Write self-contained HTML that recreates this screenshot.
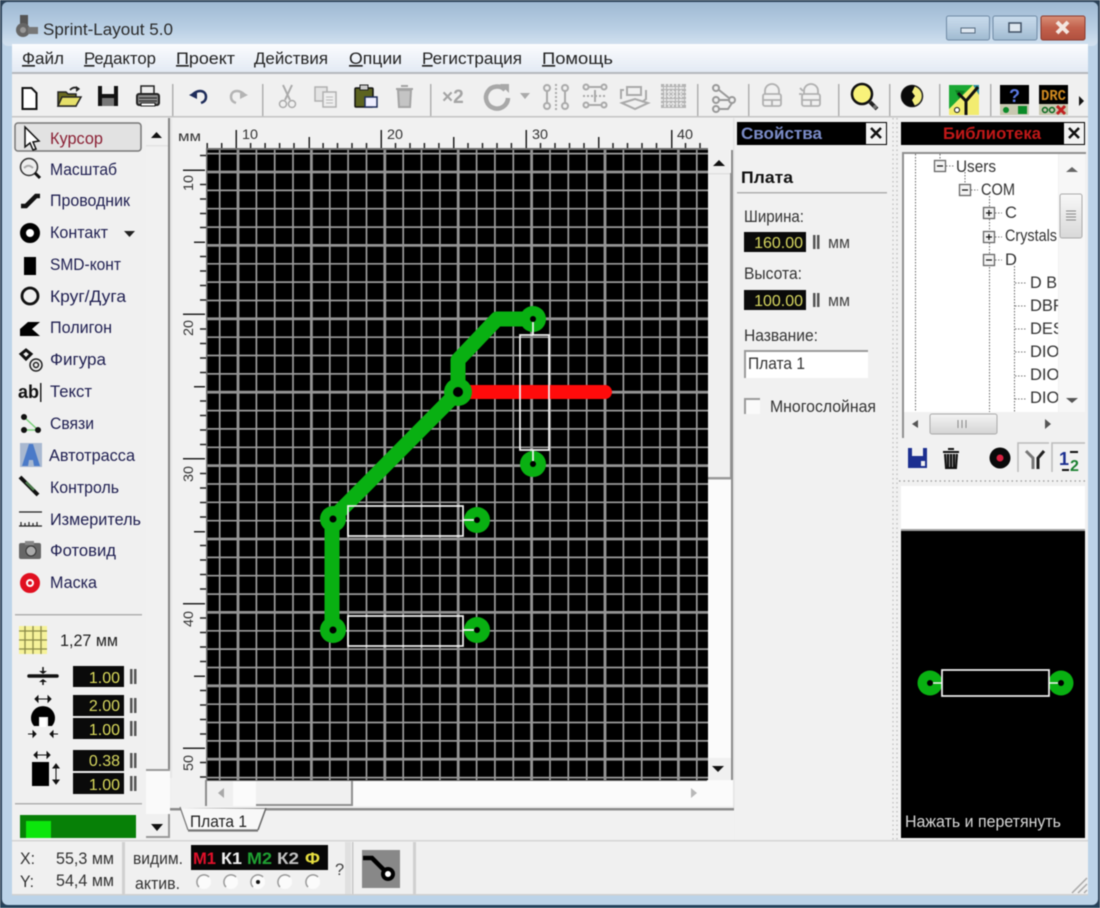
<!DOCTYPE html>
<html><head><meta charset="utf-8"><title>Sprint-Layout 5.0</title>
<style>
html,body{margin:0;padding:0;background:#f0f0f0;width:1100px;height:908px;overflow:hidden}
svg{display:block;filter:blur(.5px)}
text{font-family:"Liberation Sans","DejaVu Sans",sans-serif;font-size:16.5px;fill:#1c1c3c}
.n{fill:#1e1e50}.m{fill:#222}.g{fill:#333}
.y{fill:#d8d860;text-anchor:end;font-size:16px}
.u{text-decoration:underline}
</style></head><body>
<svg width="1100" height="908" viewBox="0 0 1100 908" xmlns="http://www.w3.org/2000/svg">
<defs>
<linearGradient id="tb" x1="0" y1="0" x2="0" y2="1"><stop offset="0" stop-color="#9fb9d3"/><stop offset=".6" stop-color="#b9cfe4"/><stop offset="1" stop-color="#d3e2f0"/></linearGradient>
<linearGradient id="mn" x1="0" y1="0" x2="0" y2="1"><stop offset="0" stop-color="#fbfcfe"/><stop offset="1" stop-color="#e3eaf4"/></linearGradient>
<linearGradient id="cb" x1="0" y1="0" x2="0" y2="1"><stop offset="0" stop-color="#d89078"/><stop offset=".5" stop-color="#c2604c"/><stop offset="1" stop-color="#b0503e"/></linearGradient>
<linearGradient id="wb" x1="0" y1="0" x2="0" y2="1"><stop offset="0" stop-color="#c8dbec"/><stop offset=".5" stop-color="#b8cde0"/><stop offset="1" stop-color="#a0bad0"/></linearGradient>
<linearGradient id="th" x1="0" y1="0" x2="0" y2="1"><stop offset="0" stop-color="#f4f4f4"/><stop offset="1" stop-color="#d4d4d4"/></linearGradient>
<linearGradient id="kb" x1="0" y1="0" x2="0" y2="1"><stop offset="0" stop-color="#f8f8f8"/><stop offset="1" stop-color="#d8d8d8"/></linearGradient>
<clipPath id="treeclip"><rect x="904" y="154" width="154" height="258"/></clipPath>
<clipPath id="boardclip"><rect x="206" y="148" width="502" height="632"/></clipPath>
</defs>

<!-- window frame -->
<rect width="1100" height="908" fill="#2c4258"/>
<rect x="2" y="2" width="1096" height="903" rx="6" fill="#bcd3e8"/>
<rect x="2" y="2" width="1096" height="44" rx="6" fill="url(#tb)"/>
<rect x="12" y="44" width="1076" height="851" fill="#f0f0f0"/>
<rect x="0" y="905" width="1100" height="3" fill="#23425c"/>

<!-- title -->
<g>
<rect x="20" y="15" width="8" height="12" fill="#555"/>
<circle cx="23" cy="30" r="7" fill="#666"/><circle cx="23" cy="30" r="3" fill="#999"/>
<rect x="28" y="27" width="10" height="7" fill="#777"/>
</g>
<text x="43" y="35" textLength="130" lengthAdjust="spacingAndGlyphs" style="fill:#2a2a2a;font-size:17px">Sprint-Layout 5.0</text>
<rect x="946.500" y="16" width="43" height="24" rx="2" fill="url(#wb)" stroke="#6f8aa5"/>
<rect x="961" y="28" width="14" height="5" fill="#dfe8f0" stroke="#556a80"/>
<rect x="993" y="16" width="44" height="24" rx="2" fill="url(#wb)" stroke="#6f8aa5"/>
<rect x="1009" y="23" width="12" height="9" fill="#dfe8f0" stroke="#3f5064" stroke-width="1.500"/>
<rect x="1041" y="16" width="44" height="24" rx="2" fill="url(#cb)" stroke="#8c3a2c"/>
<path d="M1057 22l11 11m0-11l-11 11" stroke="#f3e6e0" stroke-width="4"/>

<!-- menu -->
<rect x="12" y="44" width="1076" height="28" fill="url(#mn)"/>
<rect x="12" y="72" width="1076" height="2" fill="#b5b8bd"/>
<g class="menu">
<text x="22" y="64" textLength="42" lengthAdjust="spacingAndGlyphs" class="m"><tspan class="u">Ф</tspan>айл</text>
<text x="84" y="64" textLength="72" lengthAdjust="spacingAndGlyphs" class="m"><tspan class="u">Р</tspan>едактор</text>
<text x="176" y="64" textLength="59" lengthAdjust="spacingAndGlyphs" class="m"><tspan class="u">П</tspan>роект</text>
<text x="254" y="64" textLength="74" lengthAdjust="spacingAndGlyphs" class="m"><tspan class="u">Д</tspan>ействия</text>
<text x="349" y="64" textLength="53" lengthAdjust="spacingAndGlyphs" class="m"><tspan class="u">О</tspan>пции</text>
<text x="422" y="64" textLength="100" lengthAdjust="spacingAndGlyphs" class="m"><tspan class="u">Р</tspan>егистрация</text>
<text x="542" y="64" textLength="71" lengthAdjust="spacingAndGlyphs" class="m"><tspan class="u">П</tspan>омощь</text>
</g>

<!-- toolbar -->
<rect x="12" y="74" width="1076" height="41" fill="#f0f0f0"/>
<rect x="12" y="116" width="1076" height="1.500" fill="#c4c4c4"/>
<g fill="#b0b0b0">
<rect x="172" y="84" width="1.500" height="32"/><rect x="262" y="84" width="1.500" height="32"/><rect x="430" y="84" width="1.500" height="32"/><rect x="697" y="84" width="1.500" height="32"/><rect x="748" y="84" width="1.500" height="32"/><rect x="838" y="84" width="1.500" height="32"/><rect x="889" y="84" width="1.500" height="32"/><rect x="939" y="84" width="1.500" height="32"/><rect x="990" y="84" width="1.500" height="32"/>
</g>
<!-- new -->
<path d="M22.500 88h9l5 5v16h-14z" fill="#fff" stroke="#111" stroke-width="2"/>
<!-- open -->
<path d="M58 106V92h8l2 2h8v12z" fill="#6b6b20" stroke="#222" stroke-width="1.500"/>
<path d="M58 106l4-9h19l-5 9z" fill="#e6e06a" stroke="#222" stroke-width="1.500"/>
<path d="M70 90c3-3 6-3 9-1" fill="none" stroke="#222" stroke-width="1.800"/><path d="M76 86l4 3-4 3z" fill="#222"/>
<!-- save -->
<rect x="98" y="86" width="20" height="20" fill="#111"/><rect x="102" y="86" width="12" height="8" fill="#eee"/><rect x="102" y="98" width="12" height="8" fill="#777"/>
<!-- print -->
<rect x="141" y="86" width="13" height="8" fill="#eee" stroke="#222" stroke-width="1.500"/>
<rect x="137" y="94" width="22" height="11" rx="2" fill="#888" stroke="#222" stroke-width="2"/>
<path d="M139 98h18M139 101h18" stroke="#222"/><rect x="141" y="103" width="14" height="3" fill="#fff" stroke="#222"/>
<!-- undo/redo -->
<path d="M192 95c6-6 14-5 14 2 0 3-2 5-5 6" fill="none" stroke="#1e2c5a" stroke-width="2.500"/><path d="M189 95l8-4v8z" fill="#1e2c5a"/>
<path d="M245 95c-6-6-14-5-14 2 0 3 2 5 5 6" fill="none" stroke="#b4b4b4" stroke-width="2.500"/><path d="M248 95l-8-4v8z" fill="#b4b4b4"/>
<!-- cut copy paste trash -->
<path d="M283 85l7 15M292 85l-7 15" stroke="#aaa" stroke-width="2"/><circle cx="283" cy="104" r="3.500" fill="none" stroke="#aaa" stroke-width="1.500"/><circle cx="292" cy="104" r="3.500" fill="none" stroke="#aaa" stroke-width="1.500"/>
<rect x="315" y="87" width="12" height="14" fill="#e4e4e4" stroke="#b0b0b0" stroke-width="1.500"/><rect x="323" y="92" width="13" height="15" fill="#eee" stroke="#b0b0b0" stroke-width="1.500"/><path d="M326 97h7M326 100h7M326 103h7" stroke="#bbb"/>
<rect x="355" y="88" width="18" height="19" rx="1" fill="#5c6320" stroke="#111" stroke-width="1.500"/><rect x="360" y="85" width="8" height="5" fill="#ccc" stroke="#222"/><rect x="365" y="97" width="12" height="10" fill="#eef" stroke="#1e2c5a" stroke-width="1.500"/>
<path d="M398 90h13l-1 17h-11zM396 89h17M401 86h7" fill="#c4c4c4" stroke="#a4a4a4" stroke-width="2"/>
<!-- gray tools -->
<text x="442" y="103" style="font-weight:bold;font-size:19px;fill:#a4a4a4">×2</text>
<path d="M505 90a11 11 0 1 0 3 8" fill="none" stroke="#a8a8a8" stroke-width="4.500"/><path d="M500 84l9 0 0 9z" fill="#a8a8a8"/>
<path d="M520 93h10l-5 6z" fill="#aaa"/>
<g fill="none" stroke="#aaa" stroke-width="2">
<path d="M556 84v26" stroke-dasharray="2 2"/><circle cx="547" cy="88" r="3"/><circle cx="547" cy="106" r="3"/><circle cx="565" cy="88" r="3"/><circle cx="565" cy="106" r="3"/><path d="M547 91v12M565 91v12"/>
<path d="M583 96h24" stroke-dasharray="2 2"/><circle cx="586" cy="87" r="2.500"/><circle cx="604" cy="87" r="2.500"/><circle cx="586" cy="105" r="2.500"/><circle cx="604" cy="105" r="2.500"/><path d="M589 87h12M589 105h12M595 90v12"/>
<path d="M624 90h-3l0 9M646 90v9l-4 3" /><rect x="627" y="87" width="14" height="8"/><path d="M622 103l13-4 13 4-13 6z"/>
</g>
<rect x="661" y="84" width="25" height="24" fill="#b4b4b4"/>
<path d="M661 88h25M661 92h25M661 96h25M661 100h25M661 104h25M665 84v24M669 84v24M673 84v24M677 84v24M681 84v24" stroke="#f0f0f0" stroke-width="1.500" stroke-dasharray="2 1"/>
<g fill="none" stroke="#999" stroke-width="2"><circle cx="716" cy="88" r="3"/><circle cx="716" cy="100" r="3"/><circle cx="716" cy="109" r="3"/><circle cx="732" cy="100" r="3"/><path d="M719 90l10 8M719 100h10M719 109h9l4-6"/></g>
<g fill="none" stroke="#b0b0b0" stroke-width="1.800"><path d="M765 94v-3a7 7 0 0 1 14 0v3"/><rect x="763" y="94" width="18" height="12" rx="2"/><path d="M763 100h18M772 100v6"/>
<path d="M804 94v-3a7 7 0 0 1 14 0v3"/><rect x="802" y="94" width="18" height="12" rx="2"/><path d="M802 100h18M811 100v6M800 88l3 3M799 94h3"/></g>
<!-- zoom -->
<circle cx="862" cy="94" r="10" fill="#f8f27a" stroke="#111" stroke-width="2.500"/><path d="M870 102l7 7" stroke="#222" stroke-width="4"/><circle cx="875" cy="107" r="2" fill="#777"/>
<!-- contrast -->
<circle cx="912" cy="96" r="10.500" fill="#f4ee80" stroke="#222" stroke-width="1.500"/><path d="M915 86a10.500 10.500 0 1 0 0 20l-3-6 3-4-3-4z" fill="#0a0a0a"/>
<!-- route -->
<rect x="949" y="85" width="30" height="30" fill="#f2ec70"/><path d="M949 85h24l-24 24z" fill="#1aa834"/><path d="M955 90l10 1-6 8z" fill="#0b7f1f"/><path d="M973 85h6v10z" fill="#2a8fa0"/>
<path d="M966 115v-14l12-14" fill="none" stroke="#111" stroke-width="3"/><path d="M958 93l8 8" stroke="#111" stroke-width="3"/>
<circle cx="957" cy="110" r="2.500" fill="#fff" stroke="#111"/>
<!-- help -->
<rect x="1000" y="85" width="29" height="19" fill="#000"/><rect x="1000" y="104" width="29" height="11" fill="#c8c8b0"/>
<text x="1009" y="102" style="font-weight:bold;font-size:18px;fill:#5a78e0">?</text>
<circle cx="1006" cy="110" r="3" fill="#0a8a28"/><rect x="1018" y="106" width="9" height="8" fill="#0a8a28"/>
<!-- DRC -->
<rect x="1039" y="85" width="29" height="19" fill="#000"/><rect x="1039" y="104" width="29" height="11" fill="#c8c8b0"/>
<text x="1041" y="100" textLength="25" lengthAdjust="spacingAndGlyphs" style="font-weight:bold;font-size:15px;font-family:'Liberation Mono',monospace;fill:#d08a20">DRC</text>
<circle cx="1045" cy="110" r="2.500" fill="none" stroke="#0a6a20" stroke-width="1.500"/><circle cx="1052" cy="110" r="2.500" fill="none" stroke="#0a6a20" stroke-width="1.500"/><path d="M1057 106l8 8m0-8l-8 8" stroke="#c02020" stroke-width="3"/>
<path d="M1079 96l5 5-5 5z" fill="#111"/>

<!-- left panel -->
<rect x="12" y="118" width="158" height="722" fill="#f0f0f0"/>
<rect x="15" y="123" width="126" height="28" rx="3" fill="#e2e2e2" stroke="#777" stroke-width="1.500"/>
<!-- left scrollbar -->
<rect x="146" y="120" width="22" height="650" fill="#f1f1f1"/>
<rect x="146" y="145" width="22" height="1.500" fill="#e2e2e2"/>
<rect x="168" y="118" width="2.500" height="653" fill="#858585"/>
<rect x="146" y="769" width="24" height="2" fill="#999"/>
<rect x="146" y="771" width="24" height="43" fill="#fafafa"/>
<path d="M151 138l5.500-6 5.500 6z" fill="#111"/>
<rect x="146" y="814" width="22" height="24" fill="#f0f0f0"/><rect x="168" y="814" width="2" height="24" fill="#999"/><rect x="146" y="836" width="24" height="2" fill="#999"/>
<path d="M151 824l6 7 6-7z" fill="#111"/>

<g>
<text x="50" y="144" textLength="53" lengthAdjust="spacingAndGlyphs" style="fill:#8a1f33">Курсор</text>
<text x="50" y="175" textLength="67" lengthAdjust="spacingAndGlyphs" class="n">Масштаб</text>
<text x="50" y="206" textLength="80" lengthAdjust="spacingAndGlyphs" class="n">Проводник</text>
<text x="50" y="238" textLength="58" lengthAdjust="spacingAndGlyphs" class="n">Контакт</text>
<text x="50" y="270" textLength="71" lengthAdjust="spacingAndGlyphs" class="n">SMD-конт</text>
<text x="50" y="302" textLength="76" lengthAdjust="spacingAndGlyphs" class="n">Круг/Дуга</text>
<text x="50" y="333" textLength="62" lengthAdjust="spacingAndGlyphs" class="n">Полигон</text>
<text x="50" y="365" textLength="56" lengthAdjust="spacingAndGlyphs" class="n">Фигура</text>
<text x="50" y="397" textLength="42" lengthAdjust="spacingAndGlyphs" class="n">Текст</text>
<text x="50" y="429" textLength="44" lengthAdjust="spacingAndGlyphs" class="n">Связи</text>
<text x="49" y="461" textLength="86" lengthAdjust="spacingAndGlyphs" class="n">Автотрасса</text>
<text x="50" y="493" textLength="69" lengthAdjust="spacingAndGlyphs" class="n">Контроль</text>
<text x="50" y="525" textLength="91" lengthAdjust="spacingAndGlyphs" class="n">Измеритель</text>
<text x="50" y="556" textLength="66" lengthAdjust="spacingAndGlyphs" class="n">Фотовид</text>
<text x="50" y="588" textLength="47" lengthAdjust="spacingAndGlyphs" class="n">Маска</text>
</g>
<!-- tool icons -->
<path d="M25 127v20l5-4 3 7 3-1-3-7 6-1z" fill="#fff" stroke="#111" stroke-width="1.500"/>
<circle cx="29" cy="167" r="8.500" fill="#eee" stroke="#333" stroke-width="1.500"/><path d="M35 173l5 5" stroke="#111" stroke-width="3"/><path d="M24 168c3-3 6-3 9 0" fill="none" stroke="#aaa" stroke-width="2"/>
<path d="M21 206h5l10-10h4" fill="none" stroke="#111" stroke-width="4.500"/>
<circle cx="30" cy="233" r="7" fill="#fff" stroke="#000" stroke-width="6"/>
<path d="M124 231h11l-5.500 6z" fill="#222"/>
<rect x="24" y="257" width="12" height="18" fill="#000"/>
<circle cx="30" cy="296" r="8" fill="none" stroke="#111" stroke-width="2.800"/>
<path d="M20 336v-7l8-7h12l-8 7 8 7z" fill="#000"/>
<path d="M21 354l5-4 5 4-5 5z" fill="none" stroke="#111" stroke-width="3"/>
<circle cx="36" cy="365" r="6" fill="none" stroke="#222" stroke-width="1.500"/><circle cx="36" cy="365" r="2.500" fill="none" stroke="#222" stroke-width="1.500"/>
<text x="18" y="398" style="font-weight:bold;font-size:18px;fill:#111" textLength="21" lengthAdjust="spacingAndGlyphs">ab</text><rect x="40" y="383" width="1.500" height="19" fill="#222"/>
<path d="M24 417l14 13H24" fill="none" stroke="#7ad07a" stroke-width="1.500"/><circle cx="24" cy="417" r="3" fill="#111"/><circle cx="24" cy="430" r="3" fill="#111"/><circle cx="38" cy="430" r="3" fill="#111"/>
<rect x="20" y="443" width="22" height="24" fill="#a8b8d0"/><path d="M22 466l7-22h4l7 22h-6l-1-6h-4l-1 6z" fill="#4a7ac8"/>
<path d="M20 477l18 18" stroke="#111" stroke-width="4"/><path d="M26 482l8 8" stroke="#4a7a4a" stroke-width="2.500"/>
<path d="M19 512h23M19 526h23M21 526v-4M25 526v-3M29 526v-4M33 526v-3M37 526v-4" stroke="#222" stroke-width="1.200" fill="none"/>
<rect x="19" y="543" width="22" height="16" rx="2" fill="#666"/><rect x="25" y="541" width="9" height="4" fill="#888"/><circle cx="31" cy="551" r="5" fill="#aaa" stroke="#333"/>
<circle cx="30" cy="583" r="7" fill="#fff" stroke="#e01020" stroke-width="6"/><circle cx="30" cy="583" r="2" fill="#e01020"/>

<rect x="15" y="614" width="127" height="1.500" fill="#b0b0b0"/>
<rect x="19" y="626" width="28" height="28" fill="#f6f29a"/>
<path d="M19 631h28M19 640h28M19 649h28M25 626v28M33 626v28M41 626v28" stroke="#8a8a48" stroke-width="1.300"/>
<text x="60" y="646" textLength="58" lengthAdjust="spacingAndGlyphs" class="m">1,27 мм</text>

<path d="M29 676h28" stroke="#111" stroke-width="3.500" stroke-linecap="round"/>
<path d="M43 667v4M43 681v4" stroke="#111" stroke-width="1.500"/><path d="M39 671h8l-4 3zM39 682h8l-4-3z" fill="#111"/>
<path d="M35 699h16M35 699l3-3v6zM51 699l-3-3v6z" fill="#111" stroke="#111" stroke-width="1"/>
<path d="M34 726a12 12 0 1 1 18 0h-4v-9h-9v9z" fill="#000"/><rect x="40" y="718" width="6" height="9" fill="#fff"/>
<path d="M28 734h8M36 734l-3-3v6zM58 734h-8M50 734l3-3v6z" fill="#111" stroke="#111"/>
<path d="M34 755h16M34 755l3-3v6zM50 755l-3-3v6z" fill="#111" stroke="#111"/>
<rect x="32" y="762" width="17" height="24" fill="#000"/>
<path d="M56 764v20M56 764l-3 4h6zM56 784l-3-4h6z" fill="#111" stroke="#111"/>

<g>
<rect x="73" y="666" width="51" height="21" fill="#0a0a0a"/><text x="120" y="683" class="y" style="fill:#dcdc5c">1.00</text>
<rect x="73" y="695" width="51" height="21" fill="#0a0a0a"/><text x="120" y="711" class="y">2.00</text>
<rect x="73" y="718" width="51" height="21" fill="#0a0a0a"/><text x="120" y="735" class="y" style="fill:#dcdc5c">1.00</text>
<rect x="73" y="750" width="51" height="21" fill="#0a0a0a"/><text x="120" y="766" class="y">0.38</text>
<rect x="73" y="773" width="51" height="21" fill="#0a0a0a"/><text x="120" y="790" class="y" style="fill:#dcdc5c">1.00</text>
</g>
<g fill="#555"><rect x="130" y="669" width="2.500" height="15"/><rect x="134" y="669" width="2.500" height="15"/><rect x="130" y="698" width="2.500" height="15"/><rect x="134" y="698" width="2.500" height="15"/><rect x="130" y="721" width="2.500" height="15"/><rect x="134" y="721" width="2.500" height="15"/><rect x="130" y="753" width="2.500" height="15"/><rect x="134" y="753" width="2.500" height="15"/><rect x="130" y="776" width="2.500" height="15"/><rect x="134" y="776" width="2.500" height="15"/></g>
<rect x="15" y="803" width="127" height="1.500" fill="#b0b0b0"/>
<rect x="20" y="815" width="116" height="23" fill="#078007"/><rect x="26" y="821" width="25" height="17" fill="#0ce60c"/>

<!-- canvas area -->
<rect x="172" y="118" width="562" height="690" fill="#f1f1f1"/>
<rect x="170" y="118" width="2" height="660" fill="#e6e6e6"/>
<text x="178" y="141" style="font-size:13.500px;fill:#333" textLength="23" lengthAdjust="spacingAndGlyphs">мм</text>
<text x="242" y="139" textLength="16" lengthAdjust="spacingAndGlyphs" style="font-size:14px;fill:#333">10</text>
<text x="387" y="139" textLength="16" lengthAdjust="spacingAndGlyphs" style="font-size:14px;fill:#333">20</text>
<text x="532" y="139" textLength="16" lengthAdjust="spacingAndGlyphs" style="font-size:14px;fill:#333">30</text>
<text x="677" y="139" textLength="16" lengthAdjust="spacingAndGlyphs" style="font-size:14px;fill:#333">40</text>
<path d="M207.200 143v5M221.700 143v5M250.600 143v5M265.100 143v5M279.600 143v5M294 143v5M323.100 143v5M337.500 143v5M352 143v5M366.500 143v5M395.500 143v5M410 143v5M424.400 143v5M438.900 143v5M468 143v5M482.500 143v5M497 143v5M511.400 143v5M540.500 143v5M555 143v5M569.500 143v5M584 143v5M613 143v5M627.500 143v5M642 143v5M656.500 143v5M685.500 143v5M700 143v5" stroke="#222" stroke-width="1.500"/>
<g fill="#222"><rect x="235.500" y="130" width="1.500" height="18"/><rect x="380.500" y="130" width="1.500" height="18"/><rect x="525.500" y="130" width="1.500" height="18"/><rect x="671" y="130" width="1.500" height="18"/>
<rect x="308.500" y="137" width="1.500" height="11"/><rect x="453" y="137" width="1.500" height="11"/><rect x="598" y="137" width="1.500" height="11"/></g>
<path d="M200 155.500h6M200 184.500h6M200 199h6M200 213.500h6M200 227.500h6M200 256.500h6M200 271h6M200 285.500h6M200 300h6M200 329h6M200 343.500h6M200 358h6M200 372.500h6M200 401h6M200 415.500h6M200 430h6M200 444.500h6M200 473.500h6M200 488h6M200 502.500h6M200 517h6M200 545.500h6M200 560h6M200 574.500h6M200 589h6M200 618h6M200 632.500h6M200 647h6M200 661.500h6M200 690.500h6M200 705h6M200 719.500h6M200 734h6M200 762.500h6M200 777h6" stroke="#222" stroke-width="1.500"/>
<g fill="#222"><rect x="183" y="169.500" width="22" height="1.500"/><rect x="183" y="313.500" width="22" height="1.500"/><rect x="183" y="458" width="22" height="1.500"/><rect x="183" y="603" width="22" height="1.500"/><rect x="183" y="747.500" width="22" height="1.500"/>
<rect x="194" y="241.500" width="11" height="1.500"/><rect x="194" y="386" width="11" height="1.500"/><rect x="194" y="531" width="11" height="1.500"/><rect x="194" y="675.500" width="11" height="1.500"/></g>
<text transform="translate(193,191) rotate(-90)" textLength="16" lengthAdjust="spacingAndGlyphs" style="font-size:14px;fill:#333">10</text>
<text transform="translate(193,336) rotate(-90)" textLength="16" lengthAdjust="spacingAndGlyphs" style="font-size:14px;fill:#333">20</text>
<text transform="translate(193,482) rotate(-90)" textLength="16" lengthAdjust="spacingAndGlyphs" style="font-size:14px;fill:#333">30</text>
<text transform="translate(193,627) rotate(-90)" textLength="16" lengthAdjust="spacingAndGlyphs" style="font-size:14px;fill:#333">40</text>
<text transform="translate(193,771) rotate(-90)" textLength="16" lengthAdjust="spacingAndGlyphs" style="font-size:14px;fill:#333">50</text>

<!-- board -->
<rect x="206" y="148" width="502" height="632" fill="#000"/>
<g clip-path="url(#boardclip)">
<path d="M219.700 148V780M256.400 148V780M274.700 148V780M293 148V780M329.800 148V780M348.100 148V780M366.500 148V780M403.200 148V780M421.500 148V780M439.900 148V780M476.600 148V780M494.900 148V780M513.300 148V780M550 148V780M568.300 148V780M586.700 148V780M623.400 148V780M641.700 148V780M660 148V780M696.800 148V780
M206 153.600H708M206 190.400H708M206 208.700H708M206 227.100H708M206 263.800H708M206 282.100H708M206 300.500H708M206 337.200H708M206 355.500H708M206 373.900H708M206 410.600H708M206 428.900H708M206 447.300H708M206 484H708M206 502.300H708M206 520.700H708M206 557.400H708M206 575.700H708M206 594.100H708M206 630.800H708M206 649.100H708M206 667.500H708M206 704.200H708M206 722.500H708M206 740.900H708M206 777.600H708" stroke="#9c9c9c" stroke-width="1.700" fill="none"/>
<path d="M238 148V780M311.400 148V780M384.800 148V780M458.200 148V780M531.600 148V780M605 148V780M678.400 148V780
M206 172H708M206 245.400H708M206 318.800H708M206 392.200H708M206 465.600H708M206 539H708M206 612.400H708M206 685.800H708M206 759.200H708" stroke="#949494" stroke-width="2.800" fill="none"/>
<rect x="206" y="146" width="502" height="4" fill="#6e6e6e"/>
<rect x="205" y="148" width="2.500" height="632" fill="#6e6e6e"/>
</g>
<!-- traces -->
<path d="M458 392H605" fill="none" stroke="#ff0b0b" stroke-width="14" stroke-linecap="round"/>
<path d="M332 630V519L458 392V360L497 319H533" fill="none" stroke="#09b012" stroke-width="15" stroke-linejoin="round"/>
<g fill="#09b012"><circle cx="333" cy="519" r="13"/><circle cx="333" cy="630" r="13"/><circle cx="458" cy="392" r="14"/><circle cx="533" cy="319" r="13"/><circle cx="533" cy="464" r="13"/><circle cx="477" cy="520" r="13"/><circle cx="477" cy="630" r="13"/></g>
<g fill="#000"><circle cx="333" cy="519" r="3.500"/><circle cx="333" cy="630" r="3.500"/><circle cx="458" cy="392" r="5"/><circle cx="533" cy="319" r="3"/><circle cx="533" cy="464" r="3"/><circle cx="477" cy="520" r="3"/><circle cx="477" cy="630" r="3"/></g>
<g fill="none" stroke="#f4f4f4" stroke-width="1.700">
<rect x="348" y="506" width="115" height="30"/><rect x="348" y="616" width="115" height="30"/><rect x="520" y="335" width="29" height="115"/>
<path d="M533 322V335M533 450V461M463 520H474M463 630H474"/>
</g>

<!-- canvas v scrollbar -->
<rect x="708" y="150" width="24" height="630" fill="#fbfbfb"/>
<rect x="708" y="150" width="22" height="328" fill="#f0f0f0"/>
<rect x="708" y="173" width="22" height="1.500" fill="#e0e0e0"/>
<rect x="708" y="477" width="23" height="2.500" fill="#9a9a9a"/>
<rect x="730" y="173" width="2" height="305" fill="#9a9a9a"/>
<path d="M713 166l6-6 6 6z" fill="#111"/>
<rect x="708" y="758" width="24" height="22" fill="#f0f0f0"/>
<path d="M712 766h12l-6 6z" fill="#111"/>
<rect x="731" y="150" width="2" height="630" fill="#8c8c8c"/>
<rect x="733" y="118" width="1.500" height="690" fill="#e4e4e4"/>
<!-- canvas h scrollbar -->
<rect x="205" y="780" width="528" height="26" fill="#fbfbfb"/>
<rect x="205" y="780" width="2" height="26" fill="#8c8c8c"/>
<rect x="207" y="780" width="26" height="26" fill="#f0f0f0"/>
<rect x="256" y="780" width="96" height="25" fill="#f0f0f0"/>
<rect x="256" y="804" width="97" height="2" fill="#909090"/><rect x="351" y="780" width="2" height="26" fill="#909090"/>
<path d="M224 788l-6 5 6 5z" fill="#a8a8a8"/>
<path d="M691 788l6 5-6 5z" fill="#b8b8b8"/>
<rect x="207" y="780" width="500" height="1" fill="#666"/>
<!-- tab -->
<rect x="170" y="808" width="564" height="2.500" fill="#8c8c8c"/>
<rect x="170" y="811" width="564" height="29" fill="#f1f1f1"/>
<path d="M180 808l8 22h70l8-21" fill="#f8f8f8" stroke="none"/>
<path d="M180 807l8 23" stroke="#777" stroke-width="1.200" fill="none"/><path d="M188 830.500h70" stroke="#777" stroke-width="2.200"/><path d="M258 830l8-22" stroke="#666" stroke-width="1.500"/>
<text x="190" y="827" textLength="57" lengthAdjust="spacingAndGlyphs" class="m">Плата 1</text>

<!-- properties -->
<rect x="735" y="118" width="160" height="722" fill="#f1f1f1"/>
<rect x="737" y="122" width="150" height="23" fill="#000"/>
<rect x="866" y="123" width="20" height="21" fill="#f2f2f2"/>
<path d="M871 128l10 10m0-10l-10 10" stroke="#111" stroke-width="2.500"/>
<text x="741" y="139" textLength="81" lengthAdjust="spacingAndGlyphs" style="font-weight:bold;fill:#7b8cc8">Свойства</text>
<text x="741" y="183" textLength="52" lengthAdjust="spacingAndGlyphs" style="font-weight:bold;fill:#111">Плата</text>
<rect x="737" y="192" width="150" height="1.500" fill="#b0b0b0"/>
<text x="744" y="222" textLength="60" lengthAdjust="spacingAndGlyphs" class="g">Ширина:</text>
<rect x="744" y="232" width="62" height="20" fill="#0a0a0a"/><text x="803" y="248" class="y">160.00</text>
<rect x="813" y="235" width="2.500" height="14" fill="#555"/><rect x="817" y="235" width="2.500" height="14" fill="#555"/>
<text x="828" y="248" textLength="22" lengthAdjust="spacingAndGlyphs" style="fill:#444">мм</text>
<text x="744" y="279" textLength="58" lengthAdjust="spacingAndGlyphs" class="g">Высота:</text>
<rect x="744" y="290" width="62" height="20" fill="#0a0a0a"/><text x="803" y="306" class="y">100.00</text>
<rect x="813" y="293" width="2.500" height="14" fill="#555"/><rect x="817" y="293" width="2.500" height="14" fill="#555"/>
<text x="828" y="306" textLength="22" lengthAdjust="spacingAndGlyphs" style="fill:#444">мм</text>
<text x="744" y="341" textLength="74" lengthAdjust="spacingAndGlyphs" class="g">Название:</text>
<rect x="744" y="350" width="124" height="28" fill="#fff"/><path d="M745 378V351H868" fill="none" stroke="#9a9a9a" stroke-width="2"/>
<text x="748" y="369" textLength="57" lengthAdjust="spacingAndGlyphs" class="g">Плата 1</text>
<rect x="744" y="398" width="16" height="16" fill="#fafafa"/><path d="M745 414V399H760" fill="none" stroke="#9a9a9a" stroke-width="2"/>
<text x="770" y="412" textLength="106" lengthAdjust="spacingAndGlyphs" class="g">Многослойная</text>

<!-- splitter -->
<path d="M893 118V840M897 118V840" stroke="#bcbcbc" stroke-width="1.200" stroke-dasharray="1.500 3"/>

<!-- library -->
<rect x="899" y="118" width="189" height="722" fill="#f1f1f1"/>
<rect x="901" y="122" width="184" height="23" fill="#000"/>
<rect x="1064" y="123" width="20" height="21" fill="#f2f2f2"/>
<path d="M1069 128l10 10m0-10l-10 10" stroke="#111" stroke-width="2.500"/>
<text x="943" y="139" textLength="98" lengthAdjust="spacingAndGlyphs" style="font-weight:bold;fill:#c01818">Библиотека</text>

<rect x="902" y="153" width="156" height="259" fill="#fff"/>
<rect x="903" y="152" width="183" height="2" fill="#8f8f8f"/>
<rect x="902" y="152" width="2" height="286" fill="#8f8f8f"/>
<g clip-path="url(#treeclip)">
<path d="M915.500 154V412M940 154V160M965 172V184M989.500 196V208M989.500 219V232M989.500 243V412M1014.500 266V412" stroke="#666" stroke-width="1" stroke-dasharray="1.500 1.500" fill="none"/>
<path d="M946 166h8M971 190h7M995 213h7M995 237h7M995 260h7M1015 283h12M1015 306h12M1015 329h12M1015 352h12M1015 376h12M1015 399h12" stroke="#777" stroke-width="1" stroke-dasharray="1.500 1.500"/>
<g fill="#f4f4f4" stroke="#666" stroke-width="1.300"><rect x="934.500" y="160.500" width="11" height="11"/><rect x="959.500" y="184.500" width="11" height="11"/><rect x="983.500" y="207.500" width="11" height="11"/><rect x="983.500" y="231.500" width="11" height="11"/><rect x="983.500" y="254.500" width="11" height="11"/></g>
<path d="M937 166h6M962 190h6M986 213h6M989 210v6M986 237h6M989 234v6M986 260h6" stroke="#111" stroke-width="1.300"/>
<text x="956" y="172" textLength="40" lengthAdjust="spacingAndGlyphs" class="g">Users</text>
<text x="981" y="195" textLength="34" lengthAdjust="spacingAndGlyphs" class="g">COM</text>
<text x="1005" y="218" class="g">C</text>
<text x="1005" y="241" textLength="52" lengthAdjust="spacingAndGlyphs" class="g">Crystals</text>
<text x="1005" y="265" class="g">D</text>
<text x="1030" y="288" textLength="36" lengthAdjust="spacingAndGlyphs" class="g">D Bri</text>
<text x="1030" y="311" class="g">DBF</text>
<text x="1030" y="334" class="g">DES</text>
<text x="1030" y="357" class="g">DIO</text>
<text x="1030" y="380" class="g">DIO</text>
<text x="1030" y="403" class="g">DIO</text>
</g>
<rect x="1059" y="154" width="26" height="258" fill="#f7f7f7"/>
<path d="M1066 172l6-5 6 5z" fill="#666"/><path d="M1066 398h12l-6 5z" fill="#555"/>
<rect x="1060" y="194" width="22" height="44" rx="2" fill="url(#kb)" stroke="#aaa"/>
<path d="M1066 211h10M1066 214h10M1066 217h10M1066 220h10" stroke="#888"/>
<rect x="904" y="412" width="182" height="25" fill="#f1f1f1"/>
<rect x="930" y="414" width="67" height="20" rx="2" fill="url(#th)" stroke="#aaa"/>
<path d="M958 420v8M962 420v8M966 420v8" stroke="#888"/>
<path d="M918 420l-6 4 6 4z" fill="#555"/><path d="M1045 419l6 5-6 5z" fill="#555"/>

<!-- library toolbar -->
<rect x="908" y="448" width="19" height="20" fill="#1c2f90"/><rect x="912" y="448" width="11" height="8" fill="#f0f0f0"/><rect x="921" y="461" width="4" height="5" fill="#f0f0f0"/>
<path d="M943 452h16M945 454l1 14h10l1-14M948 454v13M951 454v13M954 454v13M948 449h6" stroke="#111" stroke-width="2" fill="#999"/>
<circle cx="1000" cy="458" r="10.500" fill="#0a0a0a"/><circle cx="1000" cy="458" r="3.500" fill="#d82040"/>
<path d="M1018 472v-29h31" fill="none" stroke="#bbb" stroke-width="1.500"/>
<path d="M1052 472v-29h33" fill="none" stroke="#bbb" stroke-width="1.500"/>
<path d="M1026 451l7 7v11" fill="none" stroke="#777" stroke-width="3"/><path d="M1044 451l-6 7v11" fill="none" stroke="#222" stroke-width="3"/>
<text x="1059" y="465" style="font-weight:bold;font-size:18px;fill:#1c2f90">1</text>
<text x="1070" y="471" style="font-weight:bold;font-size:16px;fill:#1a8030">2</text>
<path d="M1070 452h8M1062 470h7" stroke="#111" stroke-width="2"/>
<path d="M899 481H1088" stroke="#999" stroke-width="1.300" stroke-dasharray="1.500 3"/>

<!-- preview -->
<rect x="901" y="486" width="184" height="44" fill="#fff"/>
<rect x="901" y="529" width="184" height="2" fill="#a0a0a0"/>
<rect x="901" y="531" width="184" height="307" fill="#000"/>
<circle cx="930" cy="683" r="12.500" fill="#09b012"/><circle cx="1061" cy="683" r="12.500" fill="#09b012"/>
<circle cx="930" cy="683" r="3" fill="#000"/><circle cx="1061" cy="683" r="3" fill="#000"/>
<rect x="942" y="670" width="107" height="26" fill="#000" stroke="#f4f4f4" stroke-width="1.700"/>
<path d="M933 683h9M1049 683h9" stroke="#f4f4f4" stroke-width="1.500"/>
<text x="905" y="827" textLength="156" lengthAdjust="spacingAndGlyphs" style="fill:#d8d8d8">Нажать и перетянуть</text>

<!-- status -->
<rect x="12" y="840" width="1076" height="55" fill="#f0f0f0"/>
<rect x="12" y="840" width="1076" height="1.500" fill="#d4d4d4"/>
<rect x="122" y="842" width="3" height="52" fill="#d0d0d0"/><rect x="345" y="842" width="6" height="52" fill="#e0e0e0"/><rect x="352" y="842" width="1.500" height="52" fill="#c8c8c8"/><rect x="413" y="842" width="3" height="52" fill="#d0d0d0"/>
<rect x="12" y="894" width="1076" height="1.500" fill="#d0d0d0"/>
<text x="20" y="864" class="g" textLength="15" lengthAdjust="spacingAndGlyphs">X:</text><text x="56" y="864" textLength="58" lengthAdjust="spacingAndGlyphs" class="g">55,3 мм</text>
<text x="20" y="887" class="g" textLength="14" lengthAdjust="spacingAndGlyphs">Y:</text><text x="56" y="886" textLength="58" lengthAdjust="spacingAndGlyphs" class="g">54,4 мм</text>
<text x="133" y="864" textLength="50" lengthAdjust="spacingAndGlyphs" class="g">видим.</text>
<text x="135" y="889" textLength="45" lengthAdjust="spacingAndGlyphs" class="g">актив.</text>
<rect x="191" y="845" width="137" height="25" fill="#070707"/>
<text x="193" y="864" style="font-weight:bold;fill:#e0102a" textLength="23" lengthAdjust="spacingAndGlyphs">М1</text>
<text x="221" y="864" style="font-weight:bold;fill:#f0f0f0" textLength="21" lengthAdjust="spacingAndGlyphs">К1</text>
<text x="247" y="864" style="font-weight:bold;fill:#1fa032" textLength="25" lengthAdjust="spacingAndGlyphs">М2</text>
<text x="277" y="864" style="font-weight:bold;fill:#c0c0c0" textLength="22" lengthAdjust="spacingAndGlyphs">К2</text>
<text x="305" y="864" style="font-weight:bold;fill:#e8e040" textLength="15" lengthAdjust="spacingAndGlyphs">Ф</text>
<g fill="#fbfbfb"><circle cx="204" cy="882" r="7"/><circle cx="231" cy="882" r="7"/><circle cx="258" cy="882" r="7"/><circle cx="285" cy="882" r="7"/><circle cx="313" cy="882" r="7"/></g>
<g fill="none" stroke="#999" stroke-width="1.500"><path d="M199 887a7 7 0 0 1 10-10"/><path d="M226 887a7 7 0 0 1 10-10"/><path d="M253 887a7 7 0 0 1 10-10"/><path d="M280 887a7 7 0 0 1 10-10"/><path d="M308 887a7 7 0 0 1 10-10"/></g>
<circle cx="258" cy="882" r="2" fill="#111"/>
<text x="335" y="875" style="fill:#444">?</text>
<rect x="362" y="850" width="38" height="38" fill="#888"/>
<path d="M363 858h9l13 13" fill="none" stroke="#000" stroke-width="4.500"/>
<circle cx="388" cy="874" r="5" fill="#fff" stroke="#000" stroke-width="4"/>
<path d="M1072 893l15-15M1078 893l9-9M1084 893l3-3" stroke="#aaa" stroke-width="1.500"/>
</svg>
</body></html>
